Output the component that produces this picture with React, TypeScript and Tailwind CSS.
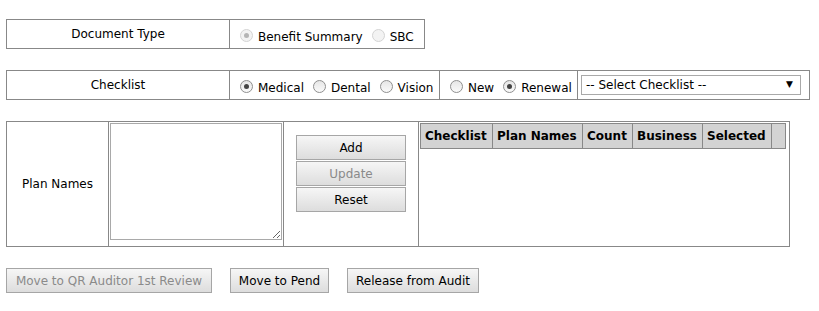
import React from "react";

function Radio({ checked, disabled }: { checked?: boolean; disabled?: boolean }) {
  return (
    <span
      className={`inline-flex h-[13px] w-[13px] shrink-0 items-center justify-center rounded-full border ${
        disabled ? "border-[#d4d4d4] bg-[#f3f3f3]" : "border-[#8f8f8f] bg-gradient-to-b from-[#e6e6e6] to-[#fafafa]"
      }`}
    >
      {checked && (
        <span className={`h-[5px] w-[5px] rounded-full ${disabled ? "bg-[#b5b5b5]" : "bg-[#444]"}`} />
      )}
    </span>
  );
}

function RadioLabel({ label, checked, disabled }: { label: string; checked?: boolean; disabled?: boolean }) {
  return (
    <label className="flex items-center gap-[5px]">
      <Radio checked={checked} disabled={disabled} />
      <span className="pt-[4px] text-black">{label}</span>
    </label>
  );
}

function Btn({ children, disabled, className = "" }: { children: React.ReactNode; disabled?: boolean; className?: string }) {
  return (
    <button
      className={`flex h-[25px] items-center justify-center border border-[#a6a6a6] bg-gradient-to-b from-[#f6f6f6] to-[#dddddd] ${
        disabled ? "text-[#8a8a8a]" : "text-black"
      } ${className}`}
    >
      {children}
    </button>
  );
}

export default function App() {
  const cols = [
    { name: "Checklist", w: "w-[72px]" },
    { name: "Plan Names", w: "w-[90px]" },
    { name: "Count", w: "w-[50px]" },
    { name: "Business", w: "w-[70px]" },
    { name: "Selected", w: "w-[69px]" },
    { name: "", w: "w-[14px]" },
  ];

  return (
    <div className="h-[311px] w-[819px] bg-white font-['DejaVu_Sans',sans-serif] text-[12px] text-black">
      <div className="flex flex-col pl-[6px] pt-[19px]">
        {/* Document Type */}
        <div className="flex h-[30px] w-[419px] border border-[#888]">
          <div className="flex w-[223px] items-center justify-center border-r border-[#888]">Document Type</div>
          <div className="flex items-center gap-[9px] pl-[10px] pt-[2px]">
            <RadioLabel label="Benefit Summary" checked disabled />
            <RadioLabel label="SBC" disabled />
          </div>
        </div>

        {/* Checklist */}
        <div className="mt-[21px] flex h-[30px] w-[804px] border border-[#888]">
          <div className="flex w-[223px] items-center justify-center border-r border-[#888]">Checklist</div>
          <div className="flex w-[210px] items-center gap-[9px] border-r border-[#888] pl-[10px] pt-[2px]">
            <RadioLabel label="Medical" checked />
            <RadioLabel label="Dental" />
            <RadioLabel label="Vision" />
          </div>
          <div className="flex w-[138px] items-center gap-[9px] border-r border-[#888] pl-[10px] pt-[2px]">
            <RadioLabel label="New" />
            <RadioLabel label="Renewal" checked />
          </div>
          <div className="flex flex-1 items-center pl-[3px] pr-[8px]">
            <div className="flex h-[20px] flex-1 items-center justify-between border border-[#a9a9a9] pl-[4px] pr-[7px]">
              <span>-- Select Checklist --</span>
              <span className="text-[9px]">▼</span>
            </div>
          </div>
        </div>

        {/* Plan Names */}
        <div className="mt-[21px] flex h-[126px] w-[784px] border border-[#888]">
          <div className="flex w-[102px] items-center justify-center border-r border-[#888]">Plan Names</div>
          <div className="flex w-[175px] flex-col border-r border-[#888] p-[1px] pb-[6px]">
            <textarea className="flex-1 resize border border-[#a9a9a9] bg-white outline-none" />
          </div>
          <div className="flex w-[135px] flex-col gap-px border-r border-[#888] pl-[12px] pt-[13px]">
            <Btn className="w-[110px]">Add</Btn>
            <Btn className="w-[110px]" disabled>Update</Btn>
            <Btn className="w-[110px]">Reset</Btn>
          </div>
          <div className="flex-1 p-px">
            <table className="table-fixed border-collapse">
              <thead>
                <tr className="h-[25px] bg-[#d3d3d3]">
                  {cols.map((c, i) => (
                    <th key={i} className={`${c.w} whitespace-nowrap border border-[#888] px-[4px] text-left font-bold`}>
                      {c.name}
                    </th>
                  ))}
                </tr>
              </thead>
            </table>
          </div>
        </div>

        {/* Actions */}
        <div className="mt-[21px] flex gap-[18px]">
          <Btn className="w-[206px]" disabled>Move to QR Auditor 1st Review</Btn>
          <Btn className="w-[99px]">Move to Pend</Btn>
          <Btn className="w-[132px]">Release from Audit</Btn>
        </div>
      </div>
    </div>
  );
}
